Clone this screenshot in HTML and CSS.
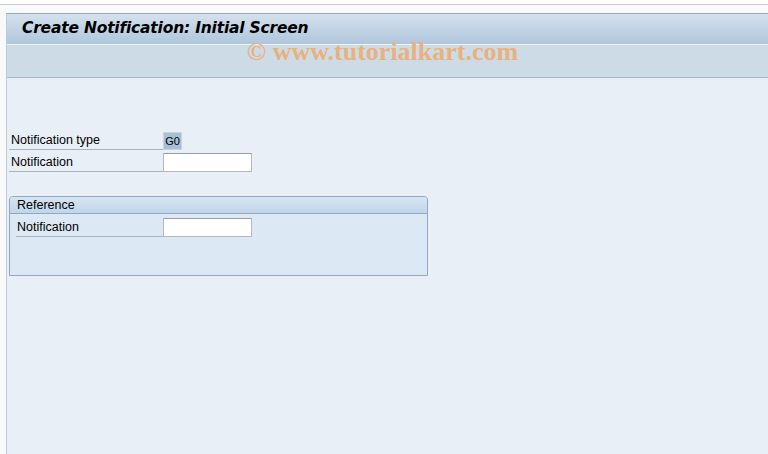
FILE: index.html
```html
<!DOCTYPE html>
<html lang="en">

<head>
    <meta charset="UTF-8">
    <title>Create Notification: Initial Screen</title>
    <link rel="stylesheet" href="styles.css">
</head>

<body>
    <div class="top-strip"></div>
    <div class="window">
        <div class="title-bar">
            <h1>Create Notification: Initial Screen</h1>
        </div>
        <div class="toolbar">
            <span class="watermark">&copy; www.tutorialkart.com</span>
        </div>

        <div class="content">
            <div class="field-row">
                <label class="field-label">Notification type</label>
                <span class="field-value">G0</span>
            </div>
            <div class="field-row">
                <label class="field-label">Notification</label>
                <input type="text" class="field-input">
            </div>

            <!-- Reference group box -->
            <div class="group-box">
                <div class="group-title">Reference</div>
                <div class="group-body">
                    <div class="field-row">
                        <label class="field-label short">Notification</label>
                        <input type="text" class="field-input">
                    </div>
                </div>
            </div>
        </div>
    </div>
</body>

</html>
```

FILE: styles.css
```css
/* General page frame */
body {
    margin: 0;
    background-color: #f7f9fb;
    font-family: 'Liberation Sans', Arial, sans-serif;
    font-size: 12.5px;
    color: #000;
    height: 454px;
    overflow: hidden;
    display: flex;
    flex-direction: column;
}

.top-strip {
    height: 4px;
    background-color: #fdfdfe;
    border-bottom: 1px solid #c9cdd4;
    margin-bottom: 8px;
}

.window {
    flex: 1;
    margin-left: 6px;
    border-left: 1px solid #c3cad3;
    border-top: 1px solid #9aa6b4;
    background-color: #e8eff7;
    display: flex;
    flex-direction: column;
}

/* Title and toolbar */
.title-bar {
    height: 30px;
    background: linear-gradient(to bottom, #d5e1ed, #afc6dc);
    border-bottom: 1px solid #eef3f8;
    display: flex;
    align-items: center;
}

h1 {
    margin: 0 0 2px 15px;
    font-family: 'DejaVu Sans', sans-serif;
    font-size: 15.5px;
    font-weight: bold;
    font-style: italic;
    letter-spacing: -0.2px;
}

.toolbar {
    height: 32px;
    background-color: #cddbe6;
    border-bottom: 1px solid #a7b5c4;
    display: flex;
    justify-content: center;
}

.watermark {
    font-family: 'Liberation Serif', 'Times New Roman', serif;
    font-weight: bold;
    font-size: 26px;
    color: #e8b27e;
    margin-left: -10px;
    margin-top: -6px;
    line-height: 26px;
}

/* Form area */
.content {
    padding: 54px 0 0 2px;
}

.field-row {
    display: flex;
    align-items: flex-end;
    margin-bottom: 3px;
}

.field-label {
    width: 152px;
    padding-left: 2px;
    line-height: 17px;
    border-bottom: 1px solid #a9b3bf;
}

.field-label.short {
    width: 146px;
    padding-left: 1px;
}

.field-value {
    width: 17px;
    height: 16px;
    line-height: 16px;
    font-size: 11px;
    text-align: center;
    background-color: #a8bfd8;
    border: 1px solid #c8d3de;
    box-sizing: content-box;
}

.field-input {
    width: 89px;
    height: 19px;
    margin: 0;
    padding: 0;
    box-sizing: border-box;
    background-color: #fff;
    border: 1px solid #b5b9bf;
    border-top-color: #9a9ea4;
}

.field-input:focus {
    outline: none;
}

/* Group box */
.group-box {
    width: 417px;
    margin-top: 24px;
    border: 1px solid #8fa8c3;
    border-radius: 4px 4px 0 0;
    background-color: #dce8f3;
}

.group-title {
    height: 16px;
    line-height: 16px;
    padding-left: 7px;
    background: linear-gradient(to bottom, #d9e5f1, #c1d5e9);
    border-bottom: 1px solid #8fa8c3;
    border-radius: 3px 3px 0 0;
}

.group-body {
    height: 57px;
    padding: 4px 0 0 6px;
}
```
